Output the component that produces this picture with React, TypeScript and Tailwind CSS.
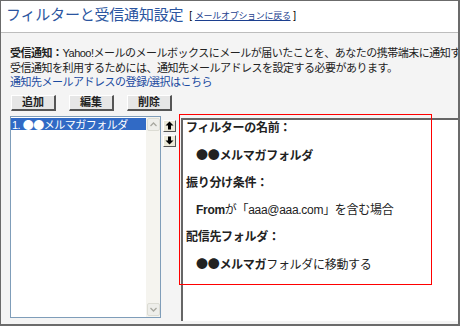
const font = "font-['Liberation_Sans','Noto_Sans_CJK_JP',sans-serif]";

// ● from the CJK face so the dots render full size
const Dots = () => <span className="font-['Noto_Sans_CJK_JP',sans-serif]">●●</span>;

const ArrowBtn = ({ dir }: { dir: 'up' | 'down' }) => (
  <div className="w-[13px] h-[12px] bg-[#ece9d8] border border-t-white border-l-white border-r-[#555] border-b-[#555] flex items-center justify-center">
    <svg width="9" height="9" viewBox="0 0 9 9">
      {dir === 'up' ? (
        <path d="M4.5 0.5 L8.5 4.5 L6 4.5 L6 8.5 L3 8.5 L3 4.5 L0.5 4.5 Z" fill="#000" />
      ) : (
        <path d="M4.5 8.5 L8.5 4.5 L6 4.5 L6 0.5 L3 0.5 L3 4.5 L0.5 4.5 Z" fill="#000" />
      )}
    </svg>
  </div>
);

const ScrollArrow = ({ dir }: { dir: 'up' | 'down' }) => (
  <div className="w-[13px] h-[13px] rounded-[2px] bg-[#eeeeea] border border-[#dcdcd4] flex items-center justify-center">
    <svg width="7" height="5" viewBox="0 0 7 5">
      <path
        d={dir === 'up' ? 'M0.5 4 L3.5 1 L6.5 4' : 'M0.5 1 L3.5 4 L6.5 1'}
        fill="none"
        stroke="#a8a8a0"
        strokeWidth="1.3"
      />
    </svg>
  </div>
);

const buttons = ['追加', '編集', '削除'];

export default function App() {
  return (
    <div
      className={`${font} relative w-[460px] h-[326px] flex flex-col overflow-hidden border-l border-t border-r-2 border-b-2 border-[#6b6b6b] bg-[#f4f4f4] text-[#222]`}
    >
      {/* header */}
      <div className="h-[32px] shrink-0 bg-white border-b border-[#bdbdbd] flex items-center pl-[5px] pb-[4px]">
        <span className="text-[15px] leading-none text-[#2b55a0] tracking-[-0.2px]">
          フィルターと受信通知設定
        </span>
        <span className="ml-[6px] mt-[3px] text-[10px] leading-none text-black">
          [{' '}
          <a className="underline text-[#1c3f8f] text-[9px] tracking-[-0.3px]">
            メールオプションに戻る
          </a>{' '}
          ]
        </span>
      </div>

      {/* body */}
      <div className="flex-1 flex flex-col pl-[9px] pt-[13px] pb-[3px] min-h-0">
        <div className="text-[11px] leading-[14.5px] tracking-[-0.5px] whitespace-nowrap">
          <div>
            <span className="font-bold">受信通知：</span>
            Yahoo!メールのメールボックスにメールが届いたことを、あなたの携帯端末に通知する
          </div>
          <div>受信通知を利用するためには、通知先メールアドレスを設定する必要があります。</div>
          <div className="text-[#1a4aa0]">通知先メールアドレスの登録/選択はこちら</div>
        </div>

        {/* buttons */}
        <div className="flex gap-[13px] mt-[5px] ml-[1px]">
          {buttons.map((b) => (
            <div
              key={b}
              className="w-[45px] h-[16px] bg-[#e6e6e6] border border-t-white border-l-white border-r-2 border-b-2 border-r-[#555] border-b-[#555] flex items-center justify-center text-[11px] font-bold leading-none"
            >
              {b}
            </div>
          ))}
        </div>

        {/* main row */}
        <div className="flex flex-1 mt-[5px] min-h-0">
          {/* list box */}
          <div className="w-[151px] h-[202px] shrink-0 bg-white border border-[#7f9db9] flex">
            <div className="flex-1 pt-[1px]">
              <div className="h-[12px] bg-[#316ac5] text-white text-[11px] leading-[12px] pl-[1px] tracking-[-0.5px]">
                1. <Dots />メルマガフォルダ
              </div>
            </div>
            <div className="w-[14px] bg-[#f5f4ef] flex flex-col justify-between items-center py-[1px]">
              <ScrollArrow dir="up" />
              <ScrollArrow dir="down" />
            </div>
          </div>

          {/* order arrows */}
          <div className="ml-[2px] mt-[4px] flex flex-col gap-[3px] shrink-0">
            <ArrowBtn dir="up" />
            <ArrowBtn dir="down" />
          </div>

          {/* preview panel */}
          <div className="ml-[5px] mt-[2px] flex-1 bg-white border-l-2 border-t-2 border-[#666] pl-[3px] flex flex-col gap-[11px] text-[12px] leading-[16px] tracking-[-0.3px] text-[#222]">
            <div className="font-bold">フィルターの名前：</div>
            <div className="font-bold pl-[10px]">
              <Dots />メルマガフォルダ
            </div>
            <div className="font-bold">振り分け条件：</div>
            <div className="pl-[10px]">
              <span className="font-bold">From</span>が「aaa@aaa.com」を含む場合
            </div>
            <div className="font-bold">配信先フォルダ：</div>
            <div className="pl-[10px]">
              <span className="font-bold">
                <Dots />メルマガ
              </span>
              フォルダに移動する
            </div>
          </div>
        </div>
      </div>

      {/* annotation */}
      <div className="absolute left-[178px] top-[113px] w-[253px] h-[171px] border border-[#ff0000] pointer-events-none" />
    </div>
  );
}
